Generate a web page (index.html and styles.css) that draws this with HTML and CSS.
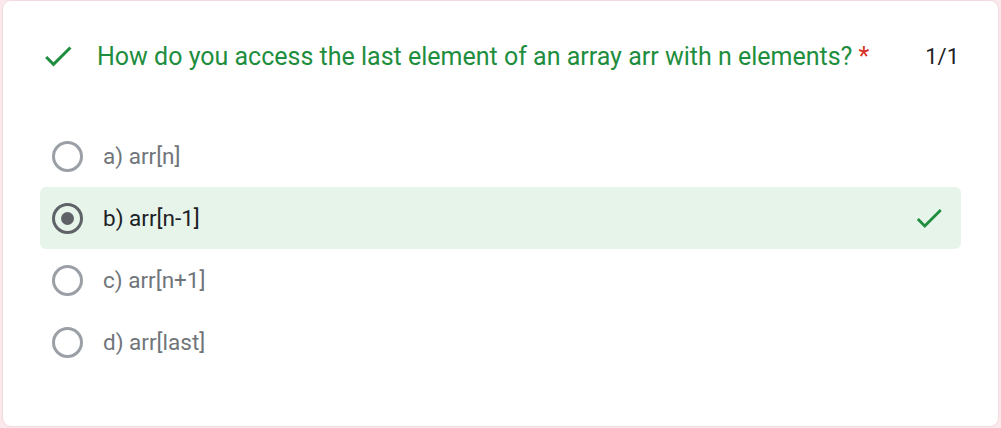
FILE: index.html
```html
<!DOCTYPE html>
<html>
<head>
<meta charset="utf-8">
<link rel="stylesheet" href="styles.css">
</head>
<body>
<div class="card">
  <div class="header">
    <svg class="check" viewBox="0 0 24 24"><path d="M9 16.17L4.83 12l-1.42 1.41L9 19 21 7l-1.41-1.41z"/></svg>
    <div class="title">How do you access the last element of an array arr with n elements? <span class="req">*</span></div>
    <div class="score">1/1</div>
  </div>
  <div class="options">
    <div class="opt"><span class="radio"></span><span class="label">a) arr[n]</span></div>
    <div class="opt correct"><span class="radio on"></span><span class="label">b) arr[n-1]</span>
      <svg class="check right" viewBox="0 0 24 24"><path d="M9 16.17L4.83 12l-1.42 1.41L9 19 21 7l-1.41-1.41z"/></svg>
    </div>
    <div class="opt"><span class="radio"></span><span class="label">c) arr[n+1]</span></div>
    <div class="opt"><span class="radio"></span><span class="label">d) arr[last]</span></div>
  </div>
</div>
</body>
</html>
```
FILE: styles.css
```css
html, body { margin: 0; padding: 0; }
body {
  background: #fbe8ec;
  font-family: Roboto, "Liberation Sans", sans-serif;
  width: 1001px;
  height: 428px;
  overflow: hidden;
}
.card {
  box-sizing: border-box;
  margin: 0 2px;
  height: 427px;
  background: #fff;
  border: 1px solid #f3dade;
  border-radius: 9px;
  padding: 29px 37px 0 37px;
}
.header {
  display: flex;
  align-items: center;
  height: 52px;
}
.check { width: 36px; height: 36px; fill: #1e8e3e; flex: none; }
.header .check { margin-right: 21px; }
.title {
  flex: 1;
  color: #1e8e3e;
  font-size: 25px;
}
.req { color: #d93025; }
.score {
  color: #202124;
  font-size: 22px;
  margin-right: 2px;
}
.options { margin-top: 43px; display: flex; flex-direction: column; }
.opt {
  display: flex;
  align-items: center;
  height: 62px;
  padding: 0 12px;
  border-radius: 6px;
}
.opt.correct { background: #e6f4ea; }
.radio {
  box-sizing: border-box;
  width: 31px; height: 31px;
  border: 3px solid #9aa0a6;
  border-radius: 50%;
  flex: none;
  position: relative;
}
.radio.on { border-color: #5f6368; }
.radio.on::after {
  content: "";
  position: absolute;
  left: 6px; top: 6px;
  width: 13px; height: 13px;
  border-radius: 50%;
  background: #5f6368;
}
.label {
  margin-left: 20px;
  font-size: 22.5px;
  color: #70757a;
  flex: 1;
}
.correct .label { color: #202124; }
.check.right { width: 34px; height: 34px; margin-right: 3px; }
```
